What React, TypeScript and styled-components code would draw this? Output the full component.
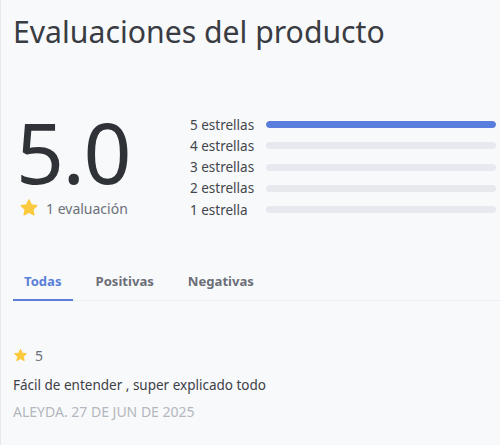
import styled, { createGlobalStyle } from "styled-components";

const GlobalStyle = createGlobalStyle`
  html, body {
    margin: 0;
    padding: 0;
    background: #f8f9fb;
  }
  body {
    font-family: "Noto Sans", Lato, sans-serif;
  }
`

const Page = styled.div`
  min-height: 445px;
  box-sizing: border-box;
  border-left: 1px solid #e6e8ec;
  padding: 12px 0 0 12px;
  background: #f8f9fb;
`

const Title = styled.h1`
  margin: 0;
  font-size: 30.2px;
  font-weight: 400;
  line-height: 40px;
  color: #393c42;
`

const Summary = styled.div`
  display: flex;
  align-items: flex-start;
  margin-top: 60px;
`

const ScoreBox = styled.div`
  width: 177px;
  padding-left: 3px;
  box-sizing: border-box;
`

const Score = styled.div`
  font-size: 84px;
  line-height: 80px;
  font-weight: 400;
  color: #2f3237;
  letter-spacing: -1.5px;
`

const CountRow = styled.div`
  display: flex;
  align-items: center;
  gap: 7px;
  margin-top: 6px;
  padding-left: 3px;
  font-size: 14px;
  color: #6b7079;
`

const Bars = styled.div`
  flex: 1;
  display: flex;
  flex-direction: column;
  gap: 4.25px;
  margin-top: 4px;
  padding-right: 4px;
`

const BarRow = styled.div`
  display: flex;
  align-items: center;
  height: 17px;
  font-size: 13.5px;
  color: #43464c;
`

const BarLabel = styled.span`
  width: 76px;
  flex-shrink: 0;
`

const Track = styled.div`
  flex: 1;
  height: 7px;
  border-radius: 4px;
  background: #e8e9ee;
  overflow: hidden;
`

const Fill = styled.div<{ $pct: number }>`
  height: 100%;
  width: ${p => p.$pct}%;
  background: #587ddc;
  border-radius: 4px;
`

const Tabs = styled.div`
  display: flex;
  margin-top: 46px;
  border-bottom: 1px solid #eceef2;
`

const Tab = styled.div<{ $active?: boolean }>`
  padding: 8px 11px 9px;
  font-size: 13.1px;
  font-weight: 700;
  color: ${p => (p.$active ? "#5b7fd8" : "#6b6f77")};
  border-bottom: 2px solid ${p => (p.$active ? "#5b7fd8" : "transparent")};
  margin-bottom: -1px;
  margin-right: 12px;
`

const Review = styled.div`
  margin-top: 45px;
`

const Rating = styled.div`
  display: flex;
  align-items: center;
  gap: 7px;
  font-size: 14px;
  color: #6b7079;
`

const Comment = styled.p`
  margin: 11px 0 0;
  font-size: 13.5px;
  color: #3d4046;
`

const Meta = styled.div`
  margin-top: 8px;
  font-size: 14px;
  color: #b3b7be;
  text-transform: uppercase;
`

function Star({ size }: { size: number }) {
  return (
    <svg width={size} height={size} viewBox="0 0 24 24">
      <path
        d="M12 2.2l2.9 6.1 6.6.8-4.9 4.6 1.3 6.6L12 17l-5.9 3.3 1.3-6.6-4.9-4.6 6.6-.8z"
        fill="#fbc93d"
        stroke="#fbc93d"
        strokeWidth="1.6"
        strokeLinejoin="round"
      />
    </svg>
  )
}

const bars = [
  { label: "5 estrellas", pct: 100 },
  { label: "4 estrellas", pct: 0 },
  { label: "3 estrellas", pct: 0 },
  { label: "2 estrellas", pct: 0 },
  { label: "1 estrella", pct: 0 },
]

export default function App() {
  return (
    <Page>
      <GlobalStyle />
      <Title>Evaluaciones del producto</Title>
      <Summary>
        <ScoreBox>
          <Score>5.0</Score>
          <CountRow>
            <Star size={20} />
            1 evaluación
          </CountRow>
        </ScoreBox>
        <Bars>
          {bars.map(b => (
            <BarRow key={b.label}>
              <BarLabel>{b.label}</BarLabel>
              <Track>
                <Fill $pct={b.pct} />
              </Track>
            </BarRow>
          ))}
        </Bars>
      </Summary>
      <Tabs>
        <Tab $active>Todas</Tab>
        <Tab>Positivas</Tab>
        <Tab>Negativas</Tab>
      </Tabs>
      <Review>
        <Rating>
          <Star size={15} />
          5
        </Rating>
        <Comment>Fácil de entender , super explicado todo</Comment>
        <Meta>Aleyda. 27 de jun de 2025</Meta>
      </Review>
    </Page>
  )
}
